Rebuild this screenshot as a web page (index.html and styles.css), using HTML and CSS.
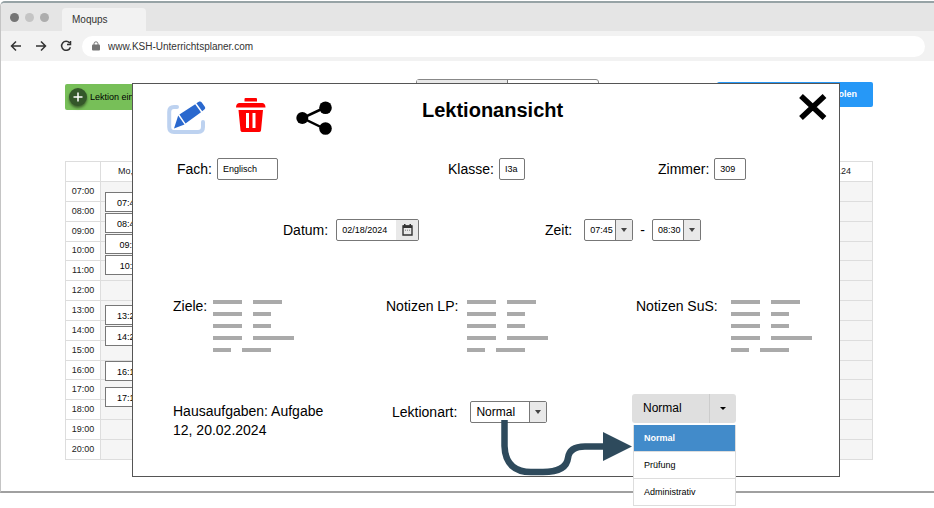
FILE: index.html
```html
<!DOCTYPE html>
<html lang="de">
<head>
<meta charset="utf-8">
<title>KSH-Unterrichtsplaner</title>
<link rel="stylesheet" href="styles.css">
</head>
<body>
<div class="browser">
  <header class="tabstrip">
    <span class="dot dot-dark"></span><span class="dot dot-light"></span><span class="dot dot-mid"></span>
    <span class="tab">Moqups</span>
  </header>
  <nav class="navbar">
    <button class="nav-button" type="button" aria-label="Zurück"><svg width="12" height="12" viewBox="0 0 12 12"><path d="M11 6H2M6 1.5L1.5 6L6 10.500" /></svg></button>
    <button class="nav-button" type="button" aria-label="Vor"><svg width="12" height="12" viewBox="0 0 12 12"><path d="M1 6H10M6 1.500L10.500 6L6 10.500" /></svg></button>
    <button class="nav-button" type="button" aria-label="Neu laden"><svg width="12" height="12" viewBox="0 0 12 12"><path d="M9.600 3A4.500 4.500 0 1 0 10.400 7.200M10.500 1V4.500H7" /></svg></button>
    <div class="address">
      <svg width="8" height="10" viewBox="0 0 8 10"><path d="M2 4V2.800a2 2 0 0 1 4 0V4" fill="none" stroke="#757575"/><rect y="3.500" width="8" height="6" rx="1" fill="#757575"/></svg>
      <input class="url" type="text" aria-label="Adresse" value="www.KSH-Unterrichtsplaner.com">
    </div>
  </nav>

  <main class="page">
    <div class="toolbar">
      <button class="add" type="button"><span class="add-icon"><svg width="10" height="10" viewBox="0 0 10 10"><path d="M5 .5V9.500M.5 5H9.500" stroke="#fff" stroke-width="1.500"/></svg></span>Lektion eintragen</button>
      <div class="segments"><button class="segment active" type="button" aria-label="Woche"></button><button class="segment" type="button" aria-label="Tag"></button></div>
      <button class="fetch" type="button">Lektionen holen</button>
    </div>
    <div class="calendar">
      <table>
        <thead><tr><th class="hour"></th><th class="first-day">Mo, 12.02.</th><th></th><th></th><th></th><th></th><th></th><th class="last-day">So, 18.02.24</th></tr></thead>
        <tbody>
          <tr><th>07:00</th><td></td><td></td><td></td><td></td><td></td><td></td><td></td></tr>
          <tr><th>08:00</th><td></td><td></td><td></td><td></td><td></td><td></td><td></td></tr>
          <tr><th>09:00</th><td></td><td></td><td></td><td></td><td></td><td></td><td></td></tr>
          <tr><th>10:00</th><td></td><td></td><td></td><td></td><td></td><td></td><td></td></tr>
          <tr><th>11:00</th><td></td><td></td><td></td><td></td><td></td><td></td><td></td></tr>
          <tr><th>12:00</th><td></td><td></td><td></td><td></td><td></td><td></td><td></td></tr>
          <tr><th>13:00</th><td></td><td></td><td></td><td></td><td></td><td></td><td></td></tr>
          <tr><th>14:00</th><td></td><td></td><td></td><td></td><td></td><td></td><td></td></tr>
          <tr><th>15:00</th><td></td><td></td><td></td><td></td><td></td><td></td><td></td></tr>
          <tr><th>16:00</th><td></td><td></td><td></td><td></td><td></td><td></td><td></td></tr>
          <tr><th>17:00</th><td></td><td></td><td></td><td></td><td></td><td></td><td></td></tr>
          <tr><th>18:00</th><td></td><td></td><td></td><td></td><td></td><td></td><td></td></tr>
          <tr><th>19:00</th><td></td><td></td><td></td><td></td><td></td><td></td><td></td></tr>
          <tr><th>20:00</th><td></td><td></td><td></td><td></td><td></td><td></td><td></td></tr>
        </tbody>
      </table>
      <div class="lessons">
        <span class="lesson">07:45 - 08:30</span>
        <span class="lesson">08:40 - 09:25</span>
        <span class="lesson">09:35-10:20</span>
        <span class="lesson">10:30-11:15</span>
        <span class="lesson after-lunch">13:25 - 14:10</span>
        <span class="lesson">14:20 - 15:05</span>
        <span class="lesson after-break">16:10 - 16:55</span>
        <span class="lesson after-pause">17:10 - 17:55</span>
      </div>
    </div>

    <section class="dialog" role="dialog" aria-labelledby="dialog-title">
      <div class="dialog-head">
        <div class="actions">
          <button class="icon-button" type="button" aria-label="Bearbeiten"><svg width="39" height="37" viewBox="0 0 39 37">
            <path d="M10 9H7Q2.200 9 2.200 14V29Q2.200 34 7 34H31Q36 34 36 29V24" fill="none" stroke="#bdd2f0" stroke-width="4" stroke-linecap="round"/>
            <path d="M7 30.500L11.200 17.600L17.500 26.500ZM12.400 16.500L28.200 6.200L34 14.200L18.500 25.500ZM29.400 5.300L32.200 3.600Q33.600 3 34.600 4.200L38 9Q38.700 10.300 37.600 11.300L35.200 13.200Z" fill="#2a68ce"/>
          </svg></button>
          <button class="icon-button" type="button" aria-label="Löschen"><svg width="30" height="37" viewBox="0 0 30 37">
            <path d="M9.500 0H20Q21 0 21 1V3.500H8.500V1Q8.500 0 9.500 0ZM3 5H26.500Q29.500 5.500 29.500 9.500H0Q0 5.500 3 5ZM2.500 12H27L25 32.500Q24.700 34 23 34H6.500Q4.800 34 4.500 32.500ZM10 15V30H13V15ZM16.500 15V30H19.500V15Z" fill="#f00" fill-rule="evenodd"/>
          </svg></button>
          <button class="icon-button" type="button" aria-label="Teilen"><svg width="36" height="37" viewBox="0 0 36 37">
            <path d="M29 9.500L6.500 20L29 31" fill="none" stroke="#000" stroke-width="2.500"/><circle cx="6.300" cy="20" r="6"/><circle cx="29.500" cy="9.800" r="6.300"/><circle cx="29.500" cy="30.500" r="6.300"/>
          </svg></button>
        </div>
        <h1 id="dialog-title">Lektionansicht</h1>
        <button class="icon-button close" type="button" aria-label="Schliessen"><svg width="28" height="26" viewBox="0 0 28 26"><path d="M2 2L25.500 24M25.500 2L2 24" stroke="#000" stroke-width="5.500"/></svg></button>
      </div>

      <div class="row row-class">
        <div class="field"><label for="fach">Fach:</label><input class="box subject" id="fach" type="text" value="Englisch"></div>
        <div class="field"><label for="klasse">Klasse:</label><input class="box group" id="klasse" type="text" value="I3a"></div>
        <div class="field"><label for="zimmer">Zimmer:</label><input class="box room" id="zimmer" type="text" value="309"></div>
      </div>

      <div class="row row-time">
        <div class="field wide"><label for="datum">Datum:</label>
          <div class="date"><input id="datum" type="text" value="02/18/2024"><button type="button" aria-label="Kalender öffnen"><svg width="11" height="12" viewBox="0 0 11 12"><path d="M1 2H10V11H1Z" fill="none" stroke="#333" stroke-width="1.400"/><path d="M1 1.500H10V4H1ZM2 0H3.500V2H2ZM7.500 0H9V2H7.500Z" fill="#333"/><path d="M3 6.200H8.500" stroke="#777" stroke-dasharray="1 1"/></svg></button></div>
        </div>
        <div class="field spaced"><label for="von">Zeit:</label>
          <div class="range">
            <div class="picker hour-picker"><select id="von"><option>07:45</option></select><span class="arrow"></span></div>
            <span>-</span>
            <div class="picker hour-picker"><select aria-label="Bis"><option>08:30</option></select><span class="arrow"></span></div>
          </div>
        </div>
      </div>

      <div class="row row-notes">
        <div class="note"><span>Ziele:</span><div class="lines">
          <div><i class="m"></i><i class="m"></i></div><div><i class="m"></i><i class="s"></i></div><div><i class="m"></i><i class="s"></i></div><div><i class="m"></i><i class="l"></i></div><div><i class="s"></i><i class="m"></i></div></div></div>
        <div class="note roomy"><span>Notizen LP:</span><div class="lines">
          <div><i class="m"></i><i class="m"></i></div><div><i class="m"></i><i class="s"></i></div><div><i class="m"></i><i class="s"></i></div><div><i class="m"></i><i class="l"></i></div><div><i class="s"></i><i class="m"></i></div></div></div>
        <div class="note roomier"><span>Notizen SuS:</span><div class="lines">
          <div><i class="m"></i><i class="m"></i></div><div><i class="m"></i><i class="s"></i></div><div><i class="m"></i><i class="s"></i></div><div><i class="m"></i><i class="l"></i></div><div><i class="s"></i><i class="m"></i></div></div></div>
      </div>

      <div class="row row-kind">
        <p class="homework">Hausaufgaben: Aufgabe 12, 20.02.2024</p>
        <div class="field kind"><label for="art">Lektionart:</label>
          <div class="picker kind-picker"><select id="art"><option>Normal</option></select><span class="arrow"></span>
            <svg class="pointer" width="132" height="60" viewBox="0 0 132 60"><path d="M3.500 0V26C4 44 14 52 30 52H42C60 52 66 46 67 38C68 30 74 26.500 84 26.500H104" fill="none" stroke="#2e4a5c" stroke-width="6.500"/><path d="M102 12L131 26.500L102 41Z" fill="#2e4a5c"/></svg>
          </div>
        </div>
        <div class="split">
          <button class="split-main" type="button">Normal</button><button class="split-toggle" type="button" aria-label="Lektionart wählen"><span class="caret"></span></button>
          <ul class="menu">
            <li><button class="selected" type="button">Normal</button></li>
            <li><button type="button">Prüfung</button></li>
            <li><button type="button">Administrativ</button></li>
          </ul>
        </div>
      </div>
    </section>
  </main>
</div>
</body>
</html>
```
FILE: styles.css
```css
* { box-sizing: border-box; }
body { min-height: 100vh; margin: 0; padding-top: 1px; background: #fff; color: #000; font: 14px/19px "Liberation Sans", Arial, sans-serif; }
button, input, select { font: inherit; color: inherit; margin: 0; padding: 0; border: 0; background: none; border-radius: 0; outline: 0; }
svg { display: block; }

.browser { border: solid #a0a0a0; border-width: 2px 0 2px 1px; border-top-color: #97a3a6; border-left-color: #c4c4c4; border-radius: 5px 0 0 0; }

.tabstrip { display: flex; align-items: center; gap: 6px; height: 28px; padding-left: 9px; background: #e5e5e5; border-radius: 4px 0 0 0; }
.dot { width: 9px; height: 9px; border-radius: 50%; }
.dot-dark { background: #757575; }
.dot-light { background: #c4c4c4; }
.dot-mid { background: #adadad; }
.tab { align-self: flex-end; width: 84px; height: 23px; margin-left: 7px; padding-left: 10px; background: #f2f2f2; border-radius: 4px 4px 0 0; font-size: 10px; line-height: 24px; color: #333; }

.navbar { display: flex; align-items: center; gap: 13px; height: 30px; padding: 0 9px; background: #f2f2f2; }
.nav-button svg { fill: none; stroke: #333; stroke-width: 1.5; }
.address { display: flex; flex: 1; align-items: center; gap: 8px; height: 21px; margin-left: -3px; padding: 0 10px; background: #fff; border-radius: 11px; }
.url { flex: 1; font-size: 10px; color: #333; }

.page { position: relative; padding: 18px 61px 31px 64px; }
.toolbar { display: grid; grid-template-columns: 351fr 183fr 118fr 156fr; height: 31px; }
.add { display: flex; align-items: center; justify-self: start; align-self: end; gap: 3px; height: 26px; padding: 0 12px 0 4px; background: #77bf58; border-radius: 2px; font-size: 9px; }
.add-icon { display: grid; place-items: center; width: 18px; height: 18px; border-radius: 50%; background: #34572a; box-shadow: 0 2px 3px rgba(0, 0, 0, .5); }
.segments { display: grid; grid-template-columns: 1fr 1fr; border: 1px solid #888; border-radius: 3px; }
.segment.active { background: #e8e8e8; border-right: 1px solid #777; }
.fetch { grid-column: 4; align-self: center; height: 25px; padding-right: 16px; background: #2698f7; border-radius: 2px; color: #fff; font-size: 9px; font-weight: 700; text-align: right; }

.calendar { position: relative; margin-top: 51px; }
table { width: 100%; height: 299px; border-collapse: collapse; table-layout: fixed; font-size: 9px; line-height: 11px; }
thead tr { height: 20px; }
th, td { padding: 0; border: 1px solid #ddd; font-weight: 400; text-align: center; color: #222; }
td { background: #f5f5f5; }
.hour { width: 35px; }
.first-day { padding-left: 17px; text-align: left; }
.last-day { padding-right: 21px; text-align: right; }
.lessons { position: absolute; top: 31px; left: 40px; display: flex; flex-direction: column; gap: 1px; width: 77px; font-size: 9px; }
.lesson { height: 20px; border: 1px solid #777; background: #fff; line-height: 21px; text-align: center; }
.lesson.after-lunch { margin-top: 29px; }
.lesson.after-break { margin-top: 14px; }
.lesson.after-pause { margin-top: 5px; }

.dialog { position: absolute; top: 22px; left: 131px; right: 94px; padding: 14px 0 36px; background: #fff; border: 1px solid #555; }
.dialog-head { display: grid; grid-template-columns: minmax(0, 255fr) minmax(0, 377fr) minmax(0, 40fr); height: 37px; padding-left: 34px; }
.actions { display: flex; gap: 30px; }
.close { justify-self: start; align-self: start; margin-top: -4px; }
h1 { margin: 0; font-size: 20px; line-height: 24px; }

.row { display: grid; align-items: start; }
.row-class { grid-template-columns: 271fr 210fr 181fr; margin-top: 23px; padding-left: 44px; }
.row-time { grid-template-columns: 262fr 294fr; margin-top: 39px; padding-left: 150px; }
.row-notes { grid-template-columns: 213fr 250fr 203fr; margin-top: 56px; padding-left: 40px; }
.row-kind { grid-template-columns: 219fr 240fr 207fr; margin-top: 42px; padding-left: 40px; }

.field { display: flex; align-items: center; gap: 5px; }
.field.wide { gap: 8px; }
.field.spaced { gap: 12px; }
.field.kind { gap: 13px; padding-top: 7px; }
.range { display: flex; align-items: center; gap: 7px; }
.box, .date, .picker { height: 22px; border: 1px solid #777; border-radius: 2px; background: #fff; font-size: 9px; }
.box { padding-left: 5px; }
.subject { width: 61px; }
.group { width: 26px; }
.room { width: 32px; }

.date { display: flex; width: 83px; overflow: hidden; }
.date input { flex: 1; min-width: 0; padding-left: 5px; }
.date button { display: grid; place-items: center; width: 22px; background: #e9e9e9; }

.picker { position: relative; display: flex; }
.picker select { flex: 1; min-width: 0; padding-left: 5px; appearance: none; }
.hour-picker { width: 49px; }
.kind-picker { width: 77px; font-size: 12px; }
.arrow { position: absolute; top: 0; right: 0; bottom: 0; display: grid; place-items: center; width: 17px; background: #e9e9e9; border-left: 1px solid #777; pointer-events: none; }
.arrow::after { content: ""; border: 3px solid transparent; border-top: 4px solid #444; border-bottom: 0; }
.pointer { position: absolute; z-index: 2; top: 18px; left: 30px; }

.note { display: flex; gap: 6px; }
.note.roomy { gap: 9px; }
.note.roomier { gap: 13px; }
.lines { display: flex; flex-direction: column; gap: 8px; padding-top: 3px; }
.lines div { display: flex; gap: 11px; }
.lines i { height: 4px; background: #aaa; }
.lines .s { width: 18px; }
.lines .m { width: 29px; }
.lines .l { width: 41px; }

.homework { width: 165px; margin: 0; padding-top: 8px; }
.split { position: relative; display: flex; width: 104px; height: 29px; border-radius: 3px; background: #dfdfdf; font-size: 12px; }
.split-main { flex: 1; padding-left: 11px; text-align: left; }
.split-toggle { display: grid; place-items: center; width: 27px; border-left: 1px solid #ccc; }
.caret { border: 3px solid transparent; border-top-color: #000; border-bottom: 0; }
.menu { position: absolute; top: 31px; left: 1px; right: 0; margin: 0; padding: 0; list-style: none; background: #fff; border: 1px solid #ddd; border-width: 0 1px; font-size: 9px; }
.menu li { border-bottom: 1px solid #ddd; }
.menu button { display: block; width: 100%; height: 26px; padding-left: 10px; text-align: left; }
.menu .selected { background: #428bca; color: #fff; font-weight: 700; }
```
